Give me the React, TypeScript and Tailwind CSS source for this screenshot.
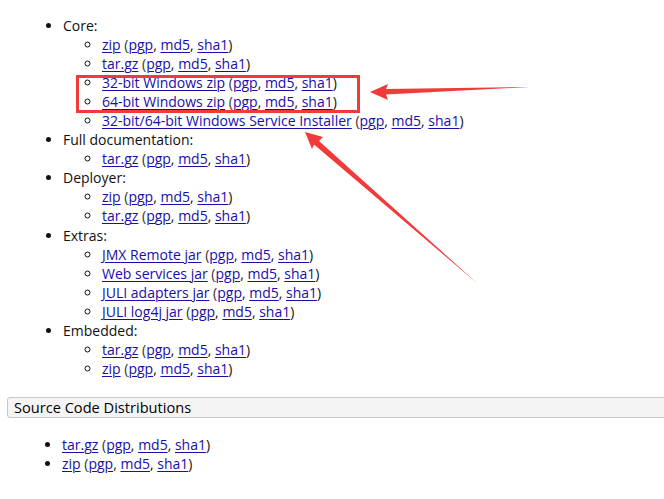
import React from 'react';

type Item = { label: string };

const sections: { title: string; items: string[] }[] = [
    { title: 'Core:', items: ['zip', 'tar.gz', '32-bit Windows zip', '64-bit Windows zip', '32-bit/64-bit Windows Service Installer'] },
    { title: 'Full documentation:', items: ['tar.gz'] },
    { title: 'Deployer:', items: ['zip', 'tar.gz'] },
    { title: 'Extras:', items: ['JMX Remote jar', 'Web services jar', 'JULI adapters jar', 'JULI log4j jar'] },
    { title: 'Embedded:', items: ['tar.gz', 'zip'] },
];

const Link = ({ children }: { children: React.ReactNode }) => (
    <a href="#" className="text-[#1a0dab] underline decoration-1 underline-offset-2">{children}</a>
);

const Download = ({ label }: Item) => (
    <>
        <Link>{label}</Link> <span className="text-[#333]">(</span><Link>pgp</Link>, <Link>md5</Link>, <Link>sha1</Link>)
    </>
);

export default function App() {
    return (
        <div className="relative w-[664px] h-[499px] bg-white overflow-hidden text-[14px] leading-[19.05px] text-[#111]" style={{ fontFamily: '"Open Sans", "Noto Sans", sans-serif' }}>
            <ul className="list-disc pl-[63px] pt-[16px]">
                {sections.map((s) => (
                    <li key={s.title}>
                        {s.title}
                        <ul className="list-[circle] pl-[39px]">
                            {s.items.map((it, i) => (
                                <li key={i}><Download label={it} /></li>
                            ))}
                        </ul>
                    </li>
                ))}
            </ul>

            <div className="mt-[19px] ml-[7px] h-[21px] border border-[#c8c8c8] rounded-[3px] bg-[#f4f4f4] pl-[6px] leading-[19px] text-black text-[14.6px] w-[700px]">
                Source Code Distributions
            </div>

            <ul className="list-disc pl-[62px] pt-[17px]">
                <li><Download label="tar.gz" /></li>
                <li><Download label="zip" /></li>
            </ul>

            {/* annotation overlay */}
            <svg className="absolute left-0 top-0 pointer-events-none" width="664" height="499">
                <rect x="77.5" y="76.5" width="281" height="35" fill="none" stroke="#f23a3a" strokeWidth="3" />
                <polygon points="370,92 388,84 386,89 530,87 386,94.5 388,100" fill="#f23a3a" />
                <polygon points="305,132 323,137 319,141 478,284 314,144.5 312,149" fill="#f23a3a" />
            </svg>
        </div>
    );
}
